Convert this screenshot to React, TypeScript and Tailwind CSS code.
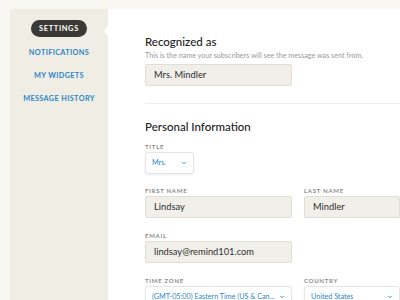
import { ChevronDown } from 'lucide-react'

const FONT = { fontFamily: 'Lato, "Open Sans", sans-serif' }

function Label({ children }: { children: string }) {
  return (
    <div className="text-[6px] leading-[8px] font-bold tracking-[0.12em] text-[#8b8b8b] uppercase mb-[1px]">
      {children}
    </div>
  )
}

function TextBox({ value, width = 'w-[147px]' }: { value: string; width?: string }) {
  return (
    <div className={`${width} h-[22px] bg-[#f1efe9] border border-[#e2dfd7] rounded-[2px] flex items-center px-[8px] text-[9.3px] text-[#2e2e2e]`}>
      {value}
    </div>
  )
}

function Select({ value, width }: { value: string; width: string }) {
  return (
    <div className={`${width} h-[22px] bg-white border border-[#e6e6e6] rounded-[3px] shadow-[0_1px_2px_rgba(0,0,0,0.08)] flex items-center justify-between gap-[3px] pl-[6px] pr-[6px] text-[7.2px] text-[#2b87c8]`}>
      <span className="whitespace-nowrap overflow-hidden">{value}</span>
      <ChevronDown size={6} strokeWidth={3.5} className="text-[#2b87c8] shrink-0" />
    </div>
  )
}

export default function App() {
  const nav = ['Notifications', 'My Widgets', 'Message History']

  return (
    <div className="w-[400px] h-[300px] overflow-hidden bg-[#f9f7f1] pt-[9px] pl-[10px] flex" style={FONT}>
      {/* sidebar */}
      <div className="w-[98px] shrink-0 bg-[#f0ede4] flex flex-col items-center pt-[11px]">
        <div className="h-[17px] px-[8px] rounded-full bg-[#3a3936] text-white text-[7.5px] font-bold tracking-[0.08em] flex items-center">
          SETTINGS
        </div>
        <div className="flex flex-col items-center gap-[13px] mt-[11px]">
          {nav.map((item) => (
            <div key={item} className="text-[7.3px] leading-[10px] font-bold tracking-[0.05em] text-[#2b87c8] uppercase">
              {item}
            </div>
          ))}
        </div>
      </div>

      {/* main panel */}
      <div className="relative flex-1 bg-white pt-[25px] pl-[37px]">
        <div className="absolute left-[-4px] top-[17px] w-0 h-0 border-y-[5px] border-y-transparent border-r-[4px] border-r-white" />

        <div className="text-[11.5px] leading-[16px] font-medium text-[#222]">Recognized as</div>
        <div className="text-[7.2px] leading-[10px] text-[#9a9a9a] mt-[1px]">
          This is the name your subscribers will see the message was sent from.
        </div>
        <div className="mt-[3px]">
          <TextBox value="Mrs. Mindler" />
        </div>

        <div className="h-px bg-[#eeeeee] mt-[17px]" />

        <div className="text-[11.5px] leading-[16px] font-medium text-[#222] mt-[15px]">Personal Information</div>

        <div className="mt-[8px]">
          <Label>Title</Label>
          <Select value="Mrs." width="w-[49px]" />
        </div>

        <div className="grid grid-cols-[147px_1fr] gap-x-[12px] mt-[13px]">
          <div>
            <Label>First Name</Label>
            <TextBox value="Lindsay" />
          </div>
          <div>
            <Label>Last Name</Label>
            <TextBox value="Mindler" width="w-full" />
          </div>
        </div>

        <div className="mt-[14px]">
          <Label>Email</Label>
          <TextBox value="lindsay@remind101.com" />
        </div>

        <div className="grid grid-cols-[147px_1fr] gap-x-[12px] mt-[14px]">
          <div>
            <Label>Time Zone</Label>
            <Select value="(GMT-05:00) Eastern Time (US & Can..." width="w-full" />
          </div>
          <div>
            <Label>Country</Label>
            <Select value="United States" width="w-full" />
          </div>
        </div>
      </div>
    </div>
  )
}
